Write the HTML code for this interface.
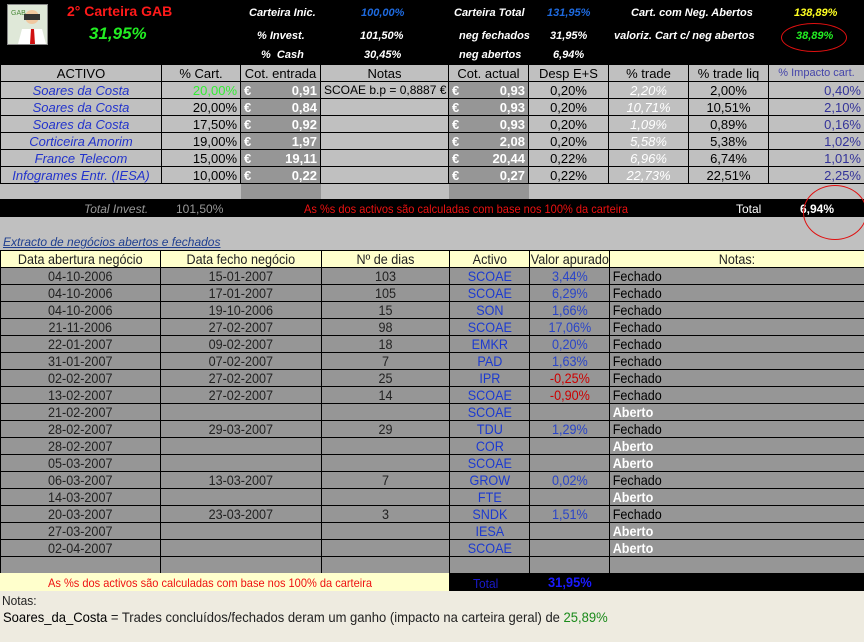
<!DOCTYPE html>
<html><head><meta charset="utf-8"><style>
*{margin:0;padding:0;box-sizing:border-box}
body{width:864px;height:642px;background:#c0c0c0;font-family:"Liberation Sans",sans-serif;font-size:12px;position:relative;overflow:hidden}
.a{position:absolute;white-space:nowrap}
.top{position:absolute;left:0;top:0;width:864px;height:64px;background:#000}
.ti{font-style:italic;font-weight:bold;color:#fff;font-size:11px}
table{border-collapse:collapse;table-layout:fixed;position:absolute;left:0}
td{border:1px solid #000;height:17px;padding:0 3px;white-space:nowrap;overflow:hidden;line-height:15px}
.t1 td{background:#c0c0c0;font-size:13px}
.t1 .d{background:#969696;color:#fff;font-weight:bold}
.bl{color:#2233cc;font-style:italic;text-align:center}
.c{text-align:center}.r{text-align:right}
.wi{color:#fff;font-style:italic;text-align:center}
.t2 td{background:#969696;font-size:14px;color:#222;padding:0}
.t2 td span{display:block;width:111%;margin-left:-5.5%;transform:scaleX(.9);text-align:center}
.t2 td.f span,.t2 td.o span{margin-left:0;transform-origin:left;text-align:left;padding-left:3px}
.t2 tr.h td{background:#ffffcc}
.t2 .s{color:#1c3ad0}
.t2 .v{color:#2a45c8}
.t2 .n{color:#c00}
.t2 .f{color:#000}
.t2 .o{color:#fff;font-weight:bold}
.nar{display:inline-block;transform:scaleX(.92);transform-origin:left}
</style></head><body>
<div class="top"></div>
<div class="a" style="left:7px;top:4px;width:41px;height:41px;background:#e8e8e0;border:1px solid #888">
<svg width="39" height="39" viewBox="0 0 39 39"><rect width="39" height="39" fill="#dfe8d8"/><text x="3" y="10" font-size="7" fill="#4a8a3a" font-family="Liberation Sans">GAB</text><circle cx="24" cy="12" r="7" fill="#f0c8a0"/><rect x="16" y="9" width="16" height="6" fill="#333"/><path d="M10 39 L14 24 L34 24 L38 39Z" fill="#fff"/><path d="M23 24 L26 24 L27 39 L22 39Z" fill="#d01010"/></svg></div>
<div class="a" style="left:67px;top:3px;color:#ff1a1a;font-weight:bold;font-size:14px">2° Carteira GAB</div>
<div class="a" style="left:89px;top:24px;color:#22ee22;font-weight:bold;font-style:italic;font-size:17px">31,95%</div>
<div class="a ti" style="left:249px;top:7px">Carteira Inic.</div>
<div class="a ti" style="left:361px;top:7px;color:#1e6adf">100,00%</div>
<div class="a ti" style="left:257px;top:30px">% Invest.</div>
<div class="a ti" style="left:360px;top:30px">101,50%</div>
<div class="a ti" style="left:261px;top:49px">%&nbsp; Cash</div>
<div class="a ti" style="left:364px;top:49px">30,45%</div>
<div class="a ti" style="left:454px;top:7px">Carteira Total</div>
<div class="a ti" style="left:547px;top:7px;color:#1e6adf">131,95%</div>
<div class="a ti" style="left:459px;top:30px">neg fechados</div>
<div class="a ti" style="left:550px;top:30px">31,95%</div>
<div class="a ti" style="left:459px;top:49px">neg abertos</div>
<div class="a ti" style="left:553px;top:49px">6,94%</div>
<div class="a ti" style="left:631px;top:7px">Cart. com Neg. Abertos</div>
<div class="a ti" style="left:794px;top:7px;color:#ffff22">138,89%</div>
<div class="a ti" style="left:614px;top:30px">valoriz. Cart c/ neg abertos</div>
<div class="a ti" style="left:796px;top:30px;color:#22ee22">38,89%</div>
<div class="a" style="left:781px;top:23px;width:66px;height:29px;border:1px solid #e01010;border-radius:50%"></div>

<table class="t1" style="top:64px;width:864px">
<colgroup><col style="width:161px"><col style="width:79px"><col style="width:80px"><col style="width:128px"><col style="width:80px"><col style="width:80px"><col style="width:80px"><col style="width:80px"><col style="width:96px"></colgroup>
<tr><td class="c">ACTIVO</td><td class="c">% Cart.</td><td class="c">Cot. entrada</td><td class="c">Notas</td><td class="c">Cot. actual</td><td class="c">Desp E+S</td><td class="c">% trade</td><td class="c">% trade liq</td><td class="c" style="color:#4444aa;font-size:11px">% Impacto cart.</td></tr>
<tr><td class="bl">Soares da Costa</td><td class="r" style="color:#33ee33">20,00%</td><td class="d">€<span style="float:right">0,91</span></td><td style="font-size:12px">SCOAE b.p = 0,8887 €</td><td class="d">€<span style="float:right">0,93</span></td><td class="c">0,20%</td><td class="wi">2,20%</td><td class="c">2,00%</td><td class="r" style="color:#333399">0,40%</td></tr>
<tr><td class="bl">Soares da Costa</td><td class="r">20,00%</td><td class="d">€<span style="float:right">0,84</span></td><td></td><td class="d">€<span style="float:right">0,93</span></td><td class="c">0,20%</td><td class="wi">10,71%</td><td class="c">10,51%</td><td class="r" style="color:#333399">2,10%</td></tr>
<tr><td class="bl">Soares da Costa</td><td class="r">17,50%</td><td class="d">€<span style="float:right">0,92</span></td><td></td><td class="d">€<span style="float:right">0,93</span></td><td class="c">0,20%</td><td class="wi">1,09%</td><td class="c">0,89%</td><td class="r" style="color:#333399">0,16%</td></tr>
<tr><td class="bl">Corticeira Amorim</td><td class="r">19,00%</td><td class="d">€<span style="float:right">1,97</span></td><td></td><td class="d">€<span style="float:right">2,08</span></td><td class="c">0,20%</td><td class="wi">5,58%</td><td class="c">5,38%</td><td class="r" style="color:#333399">1,02%</td></tr>
<tr><td class="bl">France Telecom</td><td class="r">15,00%</td><td class="d">€<span style="float:right">19,11</span></td><td></td><td class="d">€<span style="float:right">20,44</span></td><td class="c">0,22%</td><td class="wi">6,96%</td><td class="c">6,74%</td><td class="r" style="color:#333399">1,01%</td></tr>
<tr><td class="bl">Infogrames Entr. (IESA)</td><td class="r">10,00%</td><td class="d">€<span style="float:right">0,22</span></td><td></td><td class="d">€<span style="float:right">0,27</span></td><td class="c">0,22%</td><td class="wi">22,73%</td><td class="c">22,51%</td><td class="r" style="color:#333399">2,25%</td></tr>
<tr><td style="border:none"></td><td style="border:none"></td><td class="d" style="border:none;height:16px"></td><td style="border:none"></td><td class="d" style="border:none"></td><td style="border:none"></td><td style="border:none"></td><td style="border:none"></td><td style="border:none"></td></tr>
</table>
<div class="a" style="left:0;top:199px;width:864px;height:18px;background:#000"></div>
<div class="a" style="left:84px;top:202px;color:#999;font-style:italic;font-size:12px">Total Invest.</div>
<div class="a" style="left:176px;top:202px;color:#999;font-size:12px">101,50%</div>
<div class="a" style="left:304px;top:202px;color:#ee1111;font-size:12px"><span class="nar">As %s dos activos são calculadas com base nos 100% da carteira</span></div>
<div class="a" style="left:736px;top:202px;color:#fff;font-size:12px">Total</div>
<div class="a" style="left:800px;top:202px;color:#fff;font-weight:bold;font-size:12px">6,94%</div>
<div class="a" style="left:803px;top:185px;width:64px;height:55px;border:1px solid #e01010;border-radius:50%"></div>
<div class="a" style="left:3px;top:235px;color:#1f3f8f;font-style:italic;text-decoration:underline;font-size:12px">Extracto de negócios abertos e fechados</div>

<table class="t2" style="top:250px;width:864px">
<colgroup><col style="width:160px"><col style="width:161px"><col style="width:128px"><col style="width:80px"><col style="width:80px"><col style="width:255px"></colgroup>
<tr class="h"><td><span>Data abertura negócio</span></td><td><span>Data fecho negócio</span></td><td><span>Nº de dias</span></td><td><span>Activo</span></td><td style="overflow:visible"><span>Valor apurado</span></td><td><span>Notas:</span></td></tr>
<tr><td><span>04-10-2006</span></td><td><span>15-01-2007</span></td><td><span>103</span></td><td class="s"><span>SCOAE</span></td><td class="v"><span>3,44%</span></td><td class="f"><span>Fechado</span></td></tr>
<tr><td><span>04-10-2006</span></td><td><span>17-01-2007</span></td><td><span>105</span></td><td class="s"><span>SCOAE</span></td><td class="v"><span>6,29%</span></td><td class="f"><span>Fechado</span></td></tr>
<tr><td><span>04-10-2006</span></td><td><span>19-10-2006</span></td><td><span>15</span></td><td class="s"><span>SON</span></td><td class="v"><span>1,66%</span></td><td class="f"><span>Fechado</span></td></tr>
<tr><td><span>21-11-2006</span></td><td><span>27-02-2007</span></td><td><span>98</span></td><td class="s"><span>SCOAE</span></td><td class="v"><span>17,06%</span></td><td class="f"><span>Fechado</span></td></tr>
<tr><td><span>22-01-2007</span></td><td><span>09-02-2007</span></td><td><span>18</span></td><td class="s"><span>EMKR</span></td><td class="v"><span>0,20%</span></td><td class="f"><span>Fechado</span></td></tr>
<tr><td><span>31-01-2007</span></td><td><span>07-02-2007</span></td><td><span>7</span></td><td class="s"><span>PAD</span></td><td class="v"><span>1,63%</span></td><td class="f"><span>Fechado</span></td></tr>
<tr><td><span>02-02-2007</span></td><td><span>27-02-2007</span></td><td><span>25</span></td><td class="s"><span>IPR</span></td><td class="n"><span>-0,25%</span></td><td class="f"><span>Fechado</span></td></tr>
<tr><td><span>13-02-2007</span></td><td><span>27-02-2007</span></td><td><span>14</span></td><td class="s"><span>SCOAE</span></td><td class="n"><span>-0,90%</span></td><td class="f"><span>Fechado</span></td></tr>
<tr><td><span>21-02-2007</span></td><td></td><td></td><td class="s"><span>SCOAE</span></td><td></td><td class="o"><span>Aberto</span></td></tr>
<tr><td><span>28-02-2007</span></td><td><span>29-03-2007</span></td><td><span>29</span></td><td class="s"><span>TDU</span></td><td class="v"><span>1,29%</span></td><td class="f"><span>Fechado</span></td></tr>
<tr><td><span>28-02-2007</span></td><td></td><td></td><td class="s"><span>COR</span></td><td></td><td class="o"><span>Aberto</span></td></tr>
<tr><td><span>05-03-2007</span></td><td></td><td></td><td class="s"><span>SCOAE</span></td><td></td><td class="o"><span>Aberto</span></td></tr>
<tr><td><span>06-03-2007</span></td><td><span>13-03-2007</span></td><td><span>7</span></td><td class="s"><span>GROW</span></td><td class="v"><span>0,02%</span></td><td class="f"><span>Fechado</span></td></tr>
<tr><td><span>14-03-2007</span></td><td></td><td></td><td class="s"><span>FTE</span></td><td></td><td class="o"><span>Aberto</span></td></tr>
<tr><td><span>20-03-2007</span></td><td><span>23-03-2007</span></td><td><span>3</span></td><td class="s"><span>SNDK</span></td><td class="v"><span>1,51%</span></td><td class="f"><span>Fechado</span></td></tr>
<tr><td><span>27-03-2007</span></td><td></td><td></td><td class="s"><span>IESA</span></td><td></td><td class="o"><span>Aberto</span></td></tr>
<tr><td><span>02-04-2007</span></td><td></td><td></td><td class="s"><span>SCOAE</span></td><td></td><td class="o"><span>Aberto</span></td></tr>
<tr><td></td><td></td><td></td><td></td><td></td><td></td></tr>
</table>
<div class="a" style="left:0;top:573px;width:449px;height:18px;background:#ffffcc"></div>
<div class="a" style="left:449px;top:573px;width:415px;height:18px;background:#000"></div>
<div class="a" style="left:48px;top:576px;color:#ee1111;font-size:12px"><span class="nar">As %s dos activos são calculadas com base nos 100% da carteira</span></div>
<div class="a" style="left:473px;top:576px;color:#1a1acc;font-size:13px"><span class="nar">Total</span></div>
<div class="a" style="left:548px;top:574px;color:#1a1aff;font-weight:bold;font-size:14px"><span class="nar">31,95%</span></div>
<div class="a" style="left:0;top:591px;width:864px;height:51px;background:#eeebe0"></div>
<div class="a" style="left:2px;top:593px;font-size:13px;color:#222"><span class="nar">Notas:</span></div>
<div class="a" style="left:3px;top:609px;font-size:14px;color:#222"><span class="nar" style="transform:scaleX(.93)"><b style="color:#000;font-weight:normal">Soares_da_Costa</b> = Trades concluídos/fechados deram um ganho (impacto na carteira geral) de <span style="color:#1a8a1a">25,89%</span></span></div>
</body></html>
